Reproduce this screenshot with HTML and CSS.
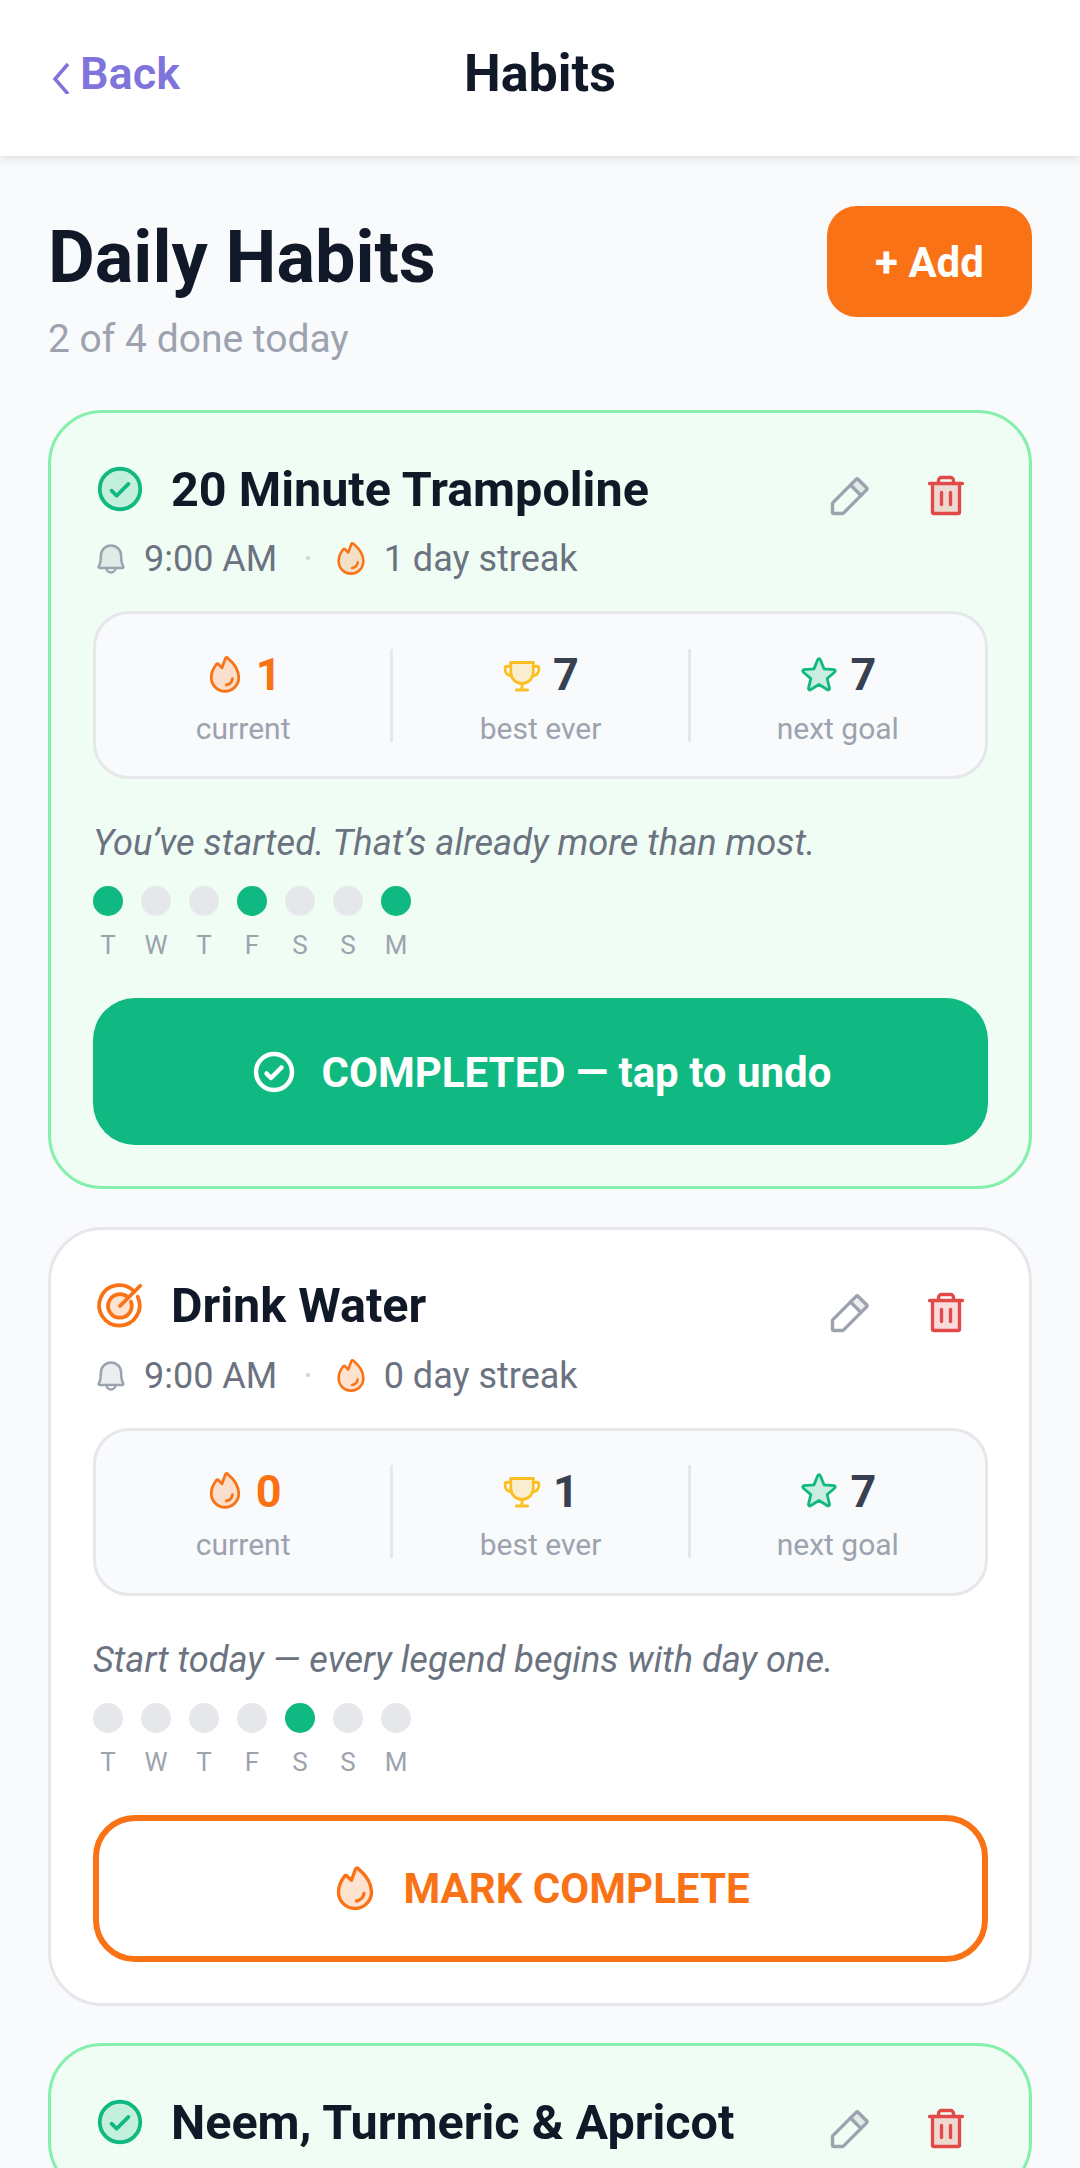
FILE: index.html
```html
<!DOCTYPE html>
<html lang="en">
<head>
  <meta charset="UTF-8" />
  <meta name="viewport" content="width=device-width, initial-scale=1.0"/>
  <title>Habits</title>
  <link rel="stylesheet" href="styles.css">
</head>
<body>
  <!-- Icon set -->
  <svg class="icon-defs" xmlns="http://www.w3.org/2000/svg" aria-hidden="true">
    <symbol id="i-check" viewBox="0 0 256 256">
      <circle cx="128" cy="128" r="96" fill="currentColor" fill-opacity=".2" stroke="none"/>
      <circle cx="128" cy="128" r="96"/>
      <polyline points="88 136 112 160 168 104"/>
    </symbol>
    <symbol id="i-check-line" viewBox="0 0 256 256">
      <circle cx="128" cy="128" r="96"/>
      <polyline points="88 136 112 160 168 104"/>
    </symbol>
    <symbol id="i-target" viewBox="0 0 256 256">
      <circle cx="128" cy="128" r="56" fill="currentColor" fill-opacity=".2" stroke="none"/>
      <path d="M128 128 224 32"/>
      <path d="M195.9 60.1A96 96 0 1 0 212 84"/>
      <path d="M167.6 88.4A56 56 0 1 0 180 108"/>
    </symbol>
    <symbol id="i-bell" viewBox="0 0 256 256">
      <path d="M56 104a72 72 0 0 1 144 0c0 35.8 8.3 64.6 14.9 76a8 8 0 0 1-6.9 12H48a8 8 0 0 1-6.9-12C47.7 168.6 56 139.8 56 104Z" fill="currentColor" fill-opacity=".2" stroke="none"/>
      <path d="M56 104a72 72 0 0 1 144 0c0 35.8 8.3 64.6 14.9 76a8 8 0 0 1-6.9 12H48a8 8 0 0 1-6.9-12C47.7 168.6 56 139.8 56 104Z"/>
      <path d="M96 192a32 32 0 0 0 64 0"/>
    </symbol>
    <symbol id="i-fire" viewBox="0 0 256 256">
      <path d="M143.4 17.9a8 8 0 0 0-12.6 3.4l-22 60.4-24.2-23.4a8 8 0 0 0-11.9.9C51 87.500 40 116.100 40 144a88 88 0 0 0 176 0C216 84.600 165.200 36 143.400 17.900Z" fill="currentColor" fill-opacity=".2" stroke="none"/>
      <path d="M143.4 17.9a8 8 0 0 0-12.6 3.4l-22 60.4-24.2-23.4a8 8 0 0 0-11.9.9C51 87.500 40 116.100 40 144a88 88 0 0 0 176 0C216 84.600 165.200 36 143.400 17.900Z"/>
      <path d="M176 152c-3.4 20.100-20 36.700-40 40"/>
    </symbol>
    <symbol id="i-trophy" viewBox="0 0 256 256">
      <path d="M56 48h144v62c0 40-32 72-72 72s-72-32-72-72Z" fill="currentColor" fill-opacity=".2" stroke="none"/>
      <path d="M56 48h144v62c0 40-32 72-72 72s-72-32-72-72Z"/>
      <path d="M92 224h72M128 182v42"/>
      <path d="M56 72H32a12 12 0 0 0-12 12v8c0 24 18 38 40 42M200 72h24a12 12 0 0 1 12 12v8c0 24-18 38-40 42"/>
    </symbol>
    <symbol id="i-star" viewBox="0 0 256 256">
      <path d="M128 189.100l54.700 33.400a8.400 8.400 0 0 0 12.500-9.200l-14.900-62.800 48.700-42a8.500 8.500 0 0 0-4.800-14.800l-63.900-5.200-24.600-59.600a8.400 8.400 0 0 0-15.500 0L95.600 88.800 31.700 94a8.500 8.500 0 0 0-4.800 14.800l48.700 42-14.900 62.500a8.400 8.400 0 0 0 12.500 9.200Z" fill="currentColor" fill-opacity=".2" stroke="none"/>
      <path d="M128 189.100l54.700 33.400a8.400 8.400 0 0 0 12.500-9.200l-14.900-62.800 48.700-42a8.500 8.500 0 0 0-4.800-14.800l-63.900-5.200-24.600-59.600a8.400 8.400 0 0 0-15.500 0L95.600 88.800 31.700 94a8.500 8.500 0 0 0-4.800 14.800l48.700 42-14.900 62.500a8.400 8.400 0 0 0 12.500 9.200Z"/>
    </symbol>
    <symbol id="i-pencil" viewBox="0 0 256 256">
      <path d="M136 64 165.700 34.300a8 8 0 0 1 11.300 0L221.700 79a8 8 0 0 1 0 11.300L192 120Z" fill="currentColor" fill-opacity=".2" stroke="none"/>
      <path d="M92.700 216H48a8 8 0 0 1-8-8V163.300a8 8 0 0 1 2.300-5.600L165.700 34.300a8 8 0 0 1 11.300 0L221.700 79a8 8 0 0 1 0 11.300L98.300 213.700A8 8 0 0 1 92.700 216Z"/>
      <path d="M136 64 192 120"/>
    </symbol>
    <symbol id="i-trash" viewBox="0 0 256 256">
      <path d="M200 56V208a8 8 0 0 1-8 8H64a8 8 0 0 1-8-8V56Z" fill="currentColor" fill-opacity=".2" stroke="none"/>
      <path d="M216 56H40M104 104v64M152 104v64"/>
      <path d="M200 56V208a8 8 0 0 1-8 8H64a8 8 0 0 1-8-8V56"/>
      <path d="M168 56V40a16 16 0 0 0-16-16H104a16 16 0 0 0-16 16V56"/>
    </symbol>
  </svg>

  <header class="topbar">
    <a class="back">
      <svg class="back-chevron" viewBox="0 0 18 32"><path d="M16 2 3 17l13 15"/></svg>
      <span>Back</span>
    </a>
    <div class="topbar-title">Habits</div>
  </header>

  <main class="page">
    <div class="page-head">
      <div>
        <h1>Daily Habits</h1>
        <p class="page-sub">2 of 4 done today</p>
      </div>
      <button class="add-btn">+ Add</button>
    </div>

    <!-- Habit 1 -->
    <section class="card card-done">
      <div class="card-top">
        <svg class="icon icon-lead green"><use href="#i-check"/></svg>
        <h2>20 Minute Trampoline</h2>
        <div class="card-actions">
          <svg class="icon icon-action gray"><use href="#i-pencil"/></svg>
          <svg class="icon icon-action red"><use href="#i-trash"/></svg>
        </div>
      </div>
      <div class="meta">
        <svg class="icon icon-meta gray"><use href="#i-bell"/></svg>
        <span>9:00 AM</span>
        <span class="meta-dot">·</span>
        <svg class="icon icon-meta orange"><use href="#i-fire"/></svg>
        <span>1 day streak</span>
      </div>
      <div class="stats">
        <div class="stat">
          <div class="stat-value orange-text"><svg class="icon icon-stat orange"><use href="#i-fire"/></svg>1</div>
          <div class="stat-label">current</div>
        </div>
        <div class="stat">
          <div class="stat-value"><svg class="icon icon-stat yellow"><use href="#i-trophy"/></svg>7</div>
          <div class="stat-label">best ever</div>
        </div>
        <div class="stat">
          <div class="stat-value"><svg class="icon icon-stat green"><use href="#i-star"/></svg>7</div>
          <div class="stat-label">next goal</div>
        </div>
      </div>
      <p class="quote">You’ve started. That’s already more than most.</p>
      <div class="week">
        <div class="day on"><i></i>T</div>
        <div class="day"><i></i>W</div>
        <div class="day"><i></i>T</div>
        <div class="day on"><i></i>F</div>
        <div class="day"><i></i>S</div>
        <div class="day"><i></i>S</div>
        <div class="day on"><i></i>M</div>
      </div>
      <button class="action action-done">
        <svg class="icon icon-btn icon-btn-bold"><use href="#i-check-line"/></svg>
        COMPLETED — tap to undo
      </button>
    </section>

    <!-- Habit 2 -->
    <section class="card">
      <div class="card-top">
        <svg class="icon icon-lead orange"><use href="#i-target"/></svg>
        <h2>Drink Water</h2>
        <div class="card-actions">
          <svg class="icon icon-action gray"><use href="#i-pencil"/></svg>
          <svg class="icon icon-action red"><use href="#i-trash"/></svg>
        </div>
      </div>
      <div class="meta">
        <svg class="icon icon-meta gray"><use href="#i-bell"/></svg>
        <span>9:00 AM</span>
        <span class="meta-dot">·</span>
        <svg class="icon icon-meta orange"><use href="#i-fire"/></svg>
        <span>0 day streak</span>
      </div>
      <div class="stats">
        <div class="stat">
          <div class="stat-value orange-text"><svg class="icon icon-stat orange"><use href="#i-fire"/></svg>0</div>
          <div class="stat-label">current</div>
        </div>
        <div class="stat">
          <div class="stat-value"><svg class="icon icon-stat yellow"><use href="#i-trophy"/></svg>1</div>
          <div class="stat-label">best ever</div>
        </div>
        <div class="stat">
          <div class="stat-value"><svg class="icon icon-stat green"><use href="#i-star"/></svg>7</div>
          <div class="stat-label">next goal</div>
        </div>
      </div>
      <p class="quote">Start today — every legend begins with day one.</p>
      <div class="week">
        <div class="day"><i></i>T</div>
        <div class="day"><i></i>W</div>
        <div class="day"><i></i>T</div>
        <div class="day"><i></i>F</div>
        <div class="day on"><i></i>S</div>
        <div class="day"><i></i>S</div>
        <div class="day"><i></i>M</div>
      </div>
      <button class="action action-todo">
        <svg class="icon icon-btn orange"><use href="#i-fire"/></svg>
        MARK COMPLETE
      </button>
    </section>

    <!-- Habit 3, runs off the bottom of the window -->
    <section class="card card-done">
      <div class="card-top">
        <svg class="icon icon-lead green"><use href="#i-check"/></svg>
        <h2>Neem, Turmeric &amp; Apricot</h2>
        <div class="card-actions">
          <svg class="icon icon-action gray"><use href="#i-pencil"/></svg>
          <svg class="icon icon-action red"><use href="#i-trash"/></svg>
        </div>
      </div>
    </section>
  </main>
</body>
</html>
```

FILE: styles.css
```css
html, body {
  height: 100%;
}
body {
  font-family: Roboto, sans-serif;
  background-color: #f9fafb;
  color: #111827;
  margin: 0;
  height: 2168px;
  overflow: hidden;
}
.icon-defs {
  display: none;
}
.icon {
  flex: none;
  fill: none;
  stroke: currentColor;
  stroke-width: 18;
  stroke-linecap: round;
  stroke-linejoin: round;
}
.green { color: #10b981; }
.orange { color: #f97316; }
.yellow { color: #fbbf24; }
.gray { color: #9ca3af; }
.red { color: #e24a4a; }

/* Top bar */
.topbar {
  height: 156px;
  background-color: #fff;
  box-shadow: 0 3px 9px rgba(0, 0, 0, 0.1);
  display: flex;
  align-items: center;
  justify-content: center;
  position: relative;
}
.back {
  position: absolute;
  left: 52px;
  top: 47px;
  display: flex;
  align-items: center;
  gap: 10px;
  color: #7f74dc;
  font-size: 45px;
  font-weight: 600;
}
.back-chevron {
  width: 18px;
  height: 32px;
  margin-top: 8px;
  fill: none;
  stroke: currentColor;
  stroke-width: 3.5;
}
.topbar-title {
  font-size: 52px;
  font-weight: 700;
  margin-top: -10px;
}

/* Page */
.page {
  padding: 50px 48px 0;
}
.page-head {
  display: flex;
  justify-content: space-between;
  align-items: flex-start;
  margin-bottom: 47px;
}
h1 {
  font-size: 72px;
  font-weight: 700;
  line-height: 84px;
  margin: 10px 0 0;
}
.page-sub {
  font-size: 39px;
  line-height: 48px;
  color: #9ca3af;
  margin: 15px 0 0;
}
.add-btn {
  width: 205px;
  height: 111px;
  border: none;
  border-radius: 30px;
  background-color: #f97316;
  color: #fff;
  font-family: inherit;
  font-size: 42px;
  font-weight: 700;
  padding-top: 2px;
}

/* Cards */
.card {
  background-color: #fff;
  border: 3px solid #e5e7eb;
  border-radius: 54px;
  padding: 46px 41px 41px 42px;
  margin-bottom: 37.5px;
}
.card-done {
  background-color: #f0fdf4;
  border-color: #86efac;
}
.card-top {
  display: flex;
  align-items: center;
  height: 60px;
}
.icon-lead {
  width: 54px;
  height: 54px;
  margin-right: 24px;
}
h2 {
  font-size: 48.5px;
  font-weight: 700;
  margin: 0;
  flex: 1;
}
.card-actions {
  display: flex;
  gap: 49px;
  margin: 16px 18px 0 0;
}
.icon-action {
  width: 48px;
  height: 48px;
}
.meta {
  display: flex;
  align-items: center;
  margin-top: 19px;
  height: 42px;
  font-size: 36px;
  color: #6b7280;
}
.icon-meta {
  width: 36px;
  height: 36px;
  margin-right: 15px;
}
.meta-dot {
  color: #d1d5db;
  margin: 0 20px 0 26px;
}

/* Stats box */
.stats {
  display: flex;
  align-items: center;
  height: 168px;
  margin-top: 31px;
  background-color: #f9fafb;
  border: 3px solid #e5e7eb;
  border-radius: 36px;
  box-sizing: border-box;
}
.stat {
  flex: 1;
  height: 93px;
  text-align: center;
  border-left: 3px solid #e5e7eb;
}
.stat:first-child {
  border-left: none;
}
.stat-value {
  display: flex;
  align-items: center;
  justify-content: center;
  gap: 11px;
  height: 48px;
  margin-top: 2px;
  font-size: 45px;
  font-weight: 700;
  color: #374151;
}
.orange-text {
  color: #f97316;
}
.icon-stat {
  width: 40px;
  height: 40px;
}
.stat-label {
  font-size: 30px;
  line-height: 36px;
  margin-top: 12px;
  color: #9ca3af;
}

.quote {
  font-size: 36.2px;
  font-style: italic;
  line-height: 48px;
  color: #6b7280;
  margin: 40px 0 0;
}

/* Week dots */
.week {
  display: flex;
  gap: 18px;
  margin-top: 19px;
}
.day {
  width: 30px;
  text-align: center;
  font-size: 26px;
  line-height: 30px;
  color: #9ca3af;
}
.day i {
  display: block;
  width: 30px;
  height: 30px;
  border-radius: 50%;
  margin-bottom: 14px;
  background-color: #e5e7eb;
}
.day.on i {
  background-color: #10b981;
}

/* Main action button */
.action {
  display: flex;
  align-items: center;
  justify-content: center;
  gap: 24px;
  width: 100%;
  height: 147px;
  margin-top: 38px;
  padding-top: 2px;
  border-radius: 42px;
  font-family: inherit;
  font-size: 42px;
  font-weight: 700;
}
.action-done {
  background-color: #10b981;
  border: none;
  color: #fff;
}
.action-todo {
  background-color: #fff;
  border: 6px solid #f97316;
  color: #f97316;
}
.icon-btn {
  width: 48px;
  height: 48px;
}
.icon-btn-bold {
  stroke-width: 24;
}
```
